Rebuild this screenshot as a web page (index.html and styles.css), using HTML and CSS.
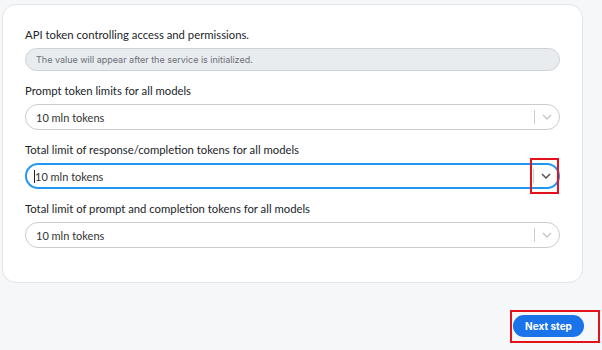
FILE: index.html
```html
<!DOCTYPE html>
<html>
  <head>
    <meta charset="utf-8">
    <title>Service settings</title>
    <link rel="stylesheet" href="styles.css">
  </head>
  <body>
    <div class="card">
      <div class="field">
        <div class="lbl">API token controlling access and permissions.</div>
        <div class="inp dis">The value will appear after the service is initialized.</div>
      </div>
      <div class="field">
        <div class="lbl">Prompt token limits for all models</div>
        <div class="sel">
          <div class="val">10 mln tokens</div>
          <div class="sep"></div>
          <div class="arr"><svg width="10" height="6" viewBox="0 0 10 6"><path d="M1 1l4 4 4-4" fill="none" stroke="currentColor" stroke-width="1.3"/></svg></div>
        </div>
      </div>
      <div class="field">
        <div class="lbl">Total limit of response/completion tokens for all models</div>
        <div class="sel foc">
          <div class="val"><span class="caret"></span>10 mln tokens</div>
          <div class="sep"></div>
          <div class="arr"><svg width="10" height="6" viewBox="0 0 10 6"><path d="M1 1l4 4 4-4" fill="none" stroke="currentColor" stroke-width="1.5"/></svg></div>
          <div class="mark"></div>
        </div>
      </div>
      <div class="field">
        <div class="lbl">Total limit of prompt and completion tokens for all models</div>
        <div class="sel">
          <div class="val">10 mln tokens</div>
          <div class="sep"></div>
          <div class="arr"><svg width="10" height="6" viewBox="0 0 10 6"><path d="M1 1l4 4 4-4" fill="none" stroke="currentColor" stroke-width="1.3"/></svg></div>
        </div>
      </div>
    </div>
    <div class="foot">
      <div class="hl">
        <button class="btn">Next step</button>
      </div>
    </div>
  </body>
</html>
```

FILE: styles.css
```css
body {
  margin: 0;
  padding: 4px 19px 0 2px;
  background: #f6f7f9;
  font-family: Lato, Inter, sans-serif;
  color: #1f2329;
}
.card {
  background: #ffffff;
  border: 1px solid #e2e4e8;
  border-radius: 14px;
  padding: 22px 22px 34px 22px;
  display: flex;
  flex-direction: column;
  gap: 12px;
}
.lbl {
  font-size: 11.3px;
  line-height: 16px;
  margin-bottom: 5px;
  color: #22252a;
}
.inp {
  box-sizing: border-box;
  border: 1px solid #cfd3d8;
  border-radius: 12px;
  padding: 0 10px;
  font-family: Inter, sans-serif;
  font-size: 9px;
  height: 23px;
  line-height: 21px;
}
.dis {
  background: #e9ecef;
  color: #6b7077;
}
.sel {
  position: relative;
  box-sizing: border-box;
  height: 26px;
  border: 1px solid #cccccc;
  border-radius: 13px;
  background: #ffffff;
  display: flex;
  align-items: center;
}
.val {
  flex: 1;
  padding-left: 10px;
  font-size: 11px;
  color: #333333;
  display: flex;
  align-items: center;
}
.sep {
  width: 1px;
  height: 14px;
  background: #cccccc;
}
.arr {
  width: 24px;
  display: flex;
  justify-content: center;
  color: #c4c4c4;
}
.foc {
  border: 2px solid #2196f3;
}
.foc .val {
  padding-left: 7px;
}
.foc .arr {
  color: #555555;
}
.caret {
  width: 1px;
  height: 13px;
  background: #222;
}
.mark {
  position: absolute;
  right: -1px;
  top: -7px;
  width: 25px;
  height: 32px;
  border: 2px solid #e3131b;
}
.foot {
  display: flex;
  justify-content: flex-end;
  margin-top: 27px;
  margin-right: -17px;
}
.hl {
  border: 2px solid #e3131b;
  padding: 3px 14px 4px 1px;
}
.btn {
  display: block;
  background: #1a73e8;
  color: #ffffff;
  border: none;
  border-radius: 11px;
  height: 22px;
  width: 71px;
  font-family: Inter, sans-serif;
  font-size: 10px;
  font-weight: 700;
  padding: 0;
}
```
